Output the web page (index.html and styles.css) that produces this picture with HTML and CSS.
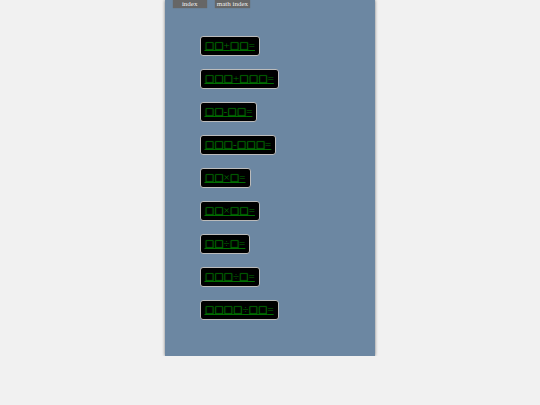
FILE: index.html
```
<!DOCTYPE html>
<html lang="en">

<head>
    <meta charset="UTF-8">
    <meta name="viewport" content="width=device-width, initial-scale=1.0">
    <title>Math Index</title>
    <link rel="stylesheet" href="styles.css">
</head>

<body>
    <main class="page">
        <nav class="nav">
            <a href="../index.html">index</a>
            <a href="index.html">math index</a>
        </nav>

        <ul class="exercises">
            <li><a href="add2.html"><span>□□</span>+<span>□□</span>=</a></li>
            <li><a href="add3.html"><span>□□□</span>+<span>□□□</span>=</a></li>
            <li><a href="sub2.html"><span>□□</span>-<span>□□</span>=</a></li>
            <li><a href="sub3.html"><span>□□□</span>-<span>□□□</span>=</a></li>
            <li><a href="mul1.html"><span>□□</span>×<span>□</span>=</a></li>
            <li><a href="mul2.html"><span>□□</span>×<span>□□</span>=</a></li>
            <li><a href="div1.html"><span>□□</span>÷<span>□</span>=</a></li>
            <li><a href="div2.html"><span>□□□</span>÷<span>□</span>=</a></li>
            <li><a href="div3.html"><span>□□□□</span>÷<span>□□</span>=</a></li>
        </ul>
    </main>
</body>

</html>
```

FILE: styles.css
```
body {
    margin: 0;
    background-color: #f1f1f1;
    font-family: "Liberation Serif", serif;
}

.page {
    width: 39%;
    margin: 0 auto;
    padding-bottom: 36px;
    background-color: #6c87a2;
    box-shadow: 0 0 3px rgba(0, 0, 0, 0.5);
}

.nav {
    display: flex;
    gap: 8px;
    padding-left: 8px;
}

.nav a {
    min-width: 30px;
    padding: 0 2px;
    background-color: #666;
    box-shadow: 0 0 1px #666;
    color: #eee;
    font-size: 7px;
    line-height: 8px;
    text-align: center;
    text-decoration: none;
}

.exercises {
    display: flex;
    flex-direction: column;
    align-items: flex-start;
    gap: 13px;
    margin: 0;
    padding: 28px 0 0 35px;
    list-style: none;
}

.exercises a {
    display: block;
    height: 18px;
    padding: 0 4px;
    border: 1px solid #bbb;
    border-radius: 3px;
    background-color: #000;
    color: #007000;
    font-size: 11px;
    line-height: 16px;
    text-decoration-thickness: 1px;
}

.exercises span {
    font-family: "DejaVu Sans", sans-serif;
    font-size: 10px;
    font-weight: bold;
    text-shadow: 0 0 1px #008000;
}
```
